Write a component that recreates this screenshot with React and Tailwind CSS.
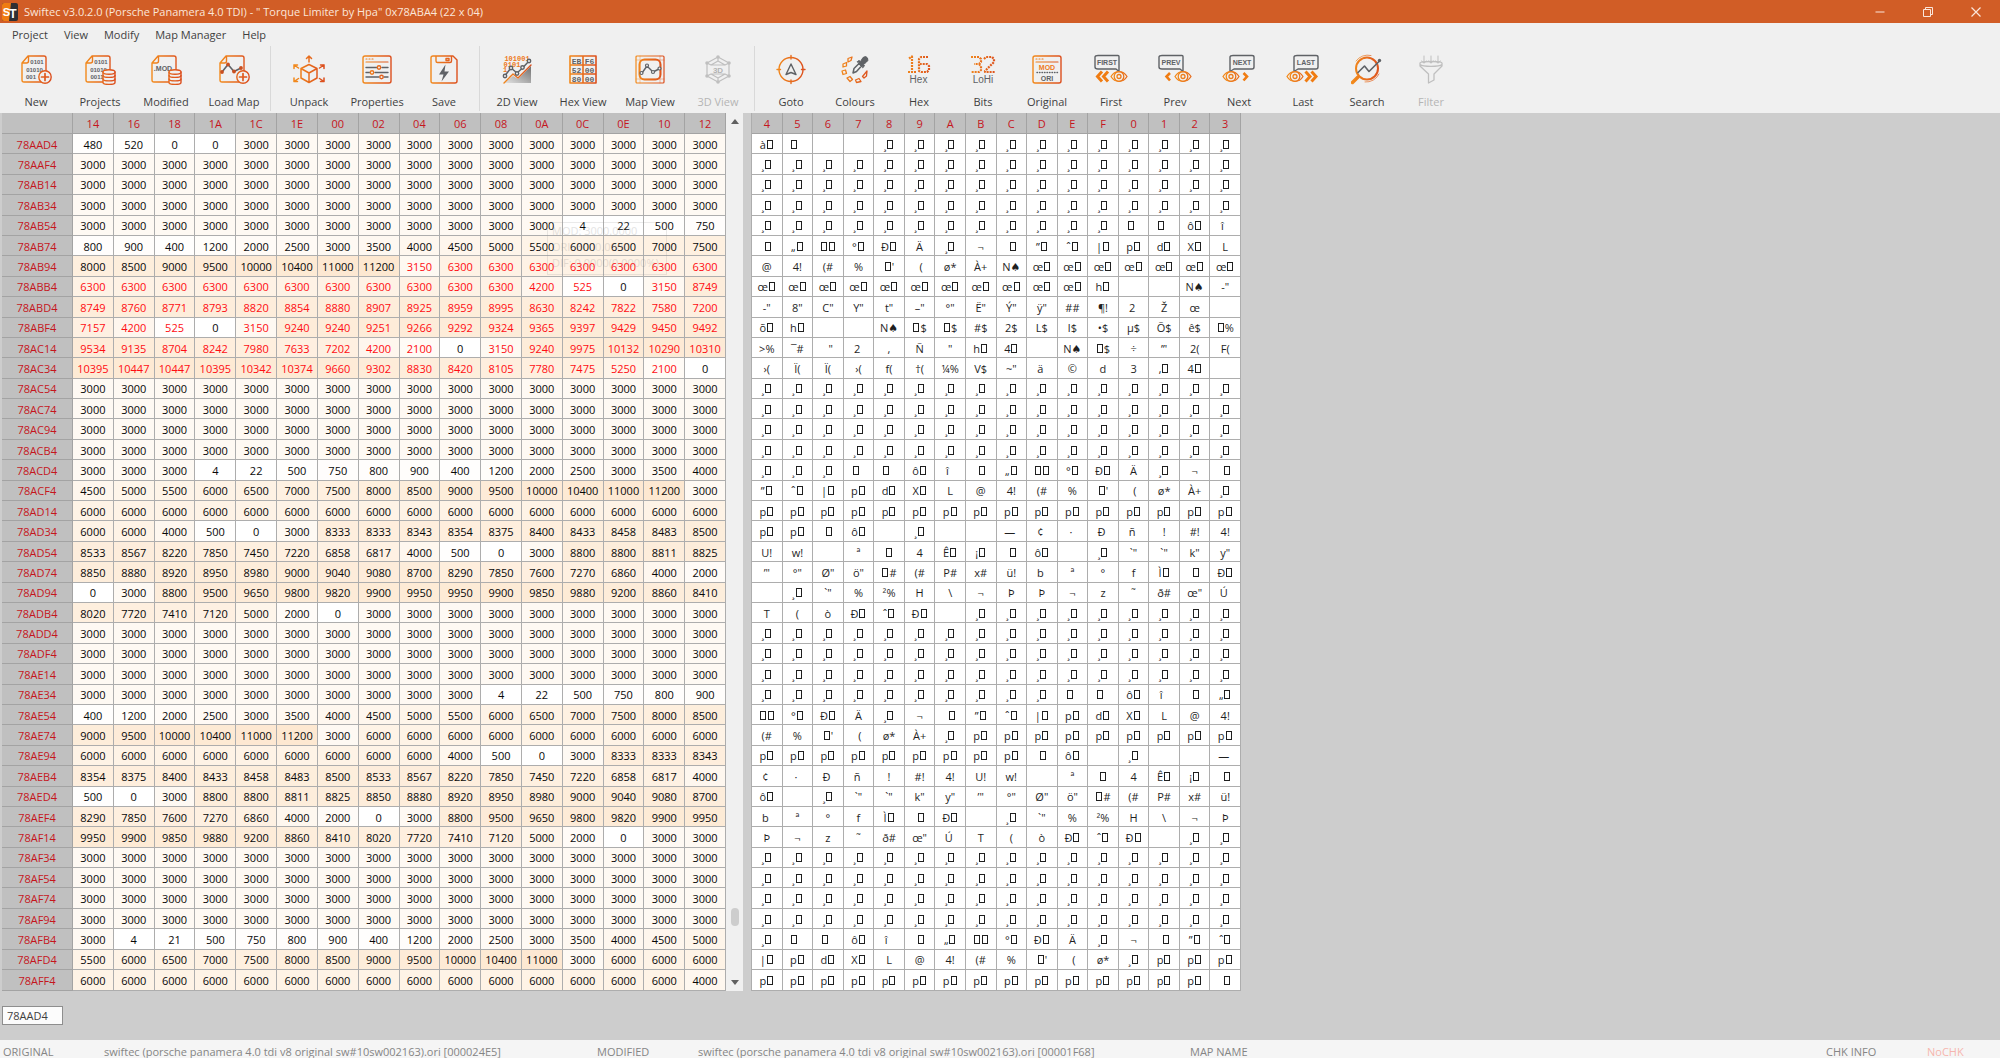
import React from "react";

const INK = "#5f6266";
const G = "url(#flame)";

const COLUMNS = "14 16 18 1A 1C 1E 00 02 04 06 08 0A 0C 0E 10 12".split(" ");
const ASCII_COLUMNS = "4 5 6 7 8 9 A B C D E F 0 1 2 3".split(" ");
const START_ADDRESS = 0x78aad4;
const ROW_BYTES = 32;
const MAX_VALUE = 11200;
const MAP_FIRST = 6 * 16 + 8;
const MAP_LAST = 11 * 16 + 15;

// One entry per row; "value*count" repeats a value.
const ROWS = [
  "480 520 0 0 3000*12",
  "3000*16",
  "3000*16",
  "3000*16",
  "3000*12 4 22 500 750",
  "800 900 400 1200 2000 2500 3000 3500 4000 4500 5000 5500 6000 6500 7000 7500",
  "8000 8500 9000 9500 10000 10400 11000 11200 3150 6300*7",
  "6300*11 4200 525 0 3150 8749",
  "8749 8760 8771 8793 8820 8854 8880 8907 8925 8959 8995 8630 8242 7822 7580 7200",
  "7157 4200 525 0 3150 9240 9240 9251 9266 9292 9324 9365 9397 9429 9450 9492",
  "9534 9135 8704 8242 7980 7633 7202 4200 2100 0 3150 9240 9975 10132 10290 10310",
  "10395 10447 10447 10395 10342 10374 9660 9302 8830 8420 8105 7780 7475 5250 2100 0",
  "3000*16",
  "3000*16",
  "3000*16",
  "3000*16",
  "3000*3 4 22 500 750 800 900 400 1200 2000 2500 3000 3500 4000",
  "4500 5000 5500 6000 6500 7000 7500 8000 8500 9000 9500 10000 10400 11000 11200 3000",
  "6000*16",
  "6000 6000 4000 500 0 3000 8333 8333 8343 8354 8375 8400 8433 8458 8483 8500",
  "8533 8567 8220 7850 7450 7220 6858 6817 4000 500 0 3000 8800 8800 8811 8825",
  "8850 8880 8920 8950 8980 9000 9040 9080 8700 8290 7850 7600 7270 6860 4000 2000",
  "0 3000 8800 9500 9650 9800 9820 9900 9950 9950 9900 9850 9880 9200 8860 8410",
  "8020 7720 7410 7120 5000 2000 0 3000*9",
  "3000*16",
  "3000*16",
  "3000*16",
  "3000*10 4 22 500 750 800 900",
  "400 1200 2000 2500 3000 3500 4000 4500 5000 5500 6000 6500 7000 7500 8000 8500",
  "9000 9500 10000 10400 11000 11200 3000 6000*9",
  "6000*9 4000 500 0 3000 8333 8333 8343",
  "8354 8375 8400 8433 8458 8483 8500 8533 8567 8220 7850 7450 7220 6858 6817 4000",
  "500 0 3000 8800 8800 8811 8825 8850 8880 8920 8950 8980 9000 9040 9080 8700",
  "8290 7850 7600 7270 6860 4000 2000 0 3000 8800 9500 9650 9800 9820 9900 9950",
  "9950 9900 9850 9880 9200 8860 8410 8020 7720 7410 7120 5000 2000 0 3000 3000",
  "3000*16",
  "3000*16",
  "3000*16",
  "3000*16",
  "3000 4 21 500 750 800 900 400 1200 2000 2500 3000 3500 4000 4500 5000",
  "5500 6000 6500 7000 7500 8000 8500 9000 9500 10000 10400 11000 3000 6000*3",
  "6000*15 4000",
].map((row) =>
  row.split(" ").flatMap((item) => {
    const [value, count = "1"] = item.split("*");
    return Array(Number(count)).fill(Number(value));
  })
);

// Windows-1252 characters for bytes 0x80 to 0x9F; 0x8D draws nothing.
const HIGH = "€▯‚ƒ„…†‡ˆ‰Š‹Œ\u200bŽ▯▯‘’“”•–—˜™š›œ▯žŸ";

function glyph(byte) {
  if (byte === 0x00 || byte === 0x02) return "\u00a0\u00a0";
  if ([0x09, 0x0a, 0x0d, 0x26].includes(byte)) return "";
  if (byte >= 0x1c && byte <= 0x1f) return "";
  if (byte === 0x0c) return "♠";
  if (byte < 0x20) return "▯";
  if (byte === 0x20) return "\u00a0";
  if (byte >= 0x80 && byte <= 0x9f) return HIGH[byte - 0x80];
  return String.fromCharCode(byte);
}

// A byte without a printable character shows as an empty box.
function Glyph({ byte }) {
  const text = glyph(byte);
  return text === "▯" ? <span className="mx-px inline-block h-[9px] w-1.5 border border-current" /> : text;
}

function heat(value) {
  const t = Math.min(value / MAX_VALUE, 1);
  const mix = (end) => Math.round(255 + (end - 255) * t);
  return `rgb(${mix(253)}, ${mix(232)}, ${mix(209)})`;
}

function Svg({ children, width = 32 }) {
  return (
    <svg width={width} height="32" viewBox={`0 0 ${width} 32`} fill="none" stroke={G} strokeWidth="1.4" strokeLinejoin="round" strokeLinecap="round" aria-hidden="true">
      {children}
    </svg>
  );
}

function T({ x, y, size = 6, fill = INK, weight = 700, children, mono }) {
  return (
    <text x={x} y={y} fontSize={size} fill={fill} stroke="none" fontWeight={weight} textAnchor="middle" fontFamily={mono ? "Liberation Mono, monospace" : "Liberation Sans, sans-serif"}>
      {children}
    </text>
  );
}

const Sheet = () => <path d="M8 2H24Q26 2 26 4V26Q26 28 24 28H4Q2 28 2 26V9ZM8.500 2V7Q8.500 9 6.500 9H2" />;
const Plus = () => (
  <g>
    <circle cx="25" cy="23" r="6.200" fill="#f0f0f0" />
    <path d="M25 19.500V26.500M21.500 23H28.500" strokeWidth="1.700" />
  </g>
);
const Database = () => (
  <g>
    <path d="M19 18V28.500C19 31 31 31 31 28.500V18" fill="#f0f0f0" />
    <ellipse cx="25" cy="18" rx="6" ry="2.200" fill="#f0f0f0" />
    <path d="M19 21.500C19 24 31 24 31 21.500M19 25C19 27.500 31 27.500 31 25" />
  </g>
);
const Binary = () => (
  <g>
    <T x="17" y="10" size="6">0101</T>
    <T x="14.500" y="17.500" size="6">01010</T>
  </g>
);
const Eye = ({ x }) => (
  <g transform={`translate(${x} 0)`} strokeWidth="1.300">
    <path d="M0 22.500C4 16 12 16 16 22.500C12 29 4 29 0 22.500Z" />
    <circle cx="8" cy="22.500" r="4.800" />
    <circle cx="8" cy="22.500" r="2" />
  </g>
);
const Bubble = ({ x, tail, label }) => (
  <g>
    <path d={tail === "right" ? "M4 1.500H24Q25 1.500 25 2.500V17.500L22 15H4Q1 15 1 13V3Q1 1.500 4 1.500Z" : "M11 1.500H30Q32 1.500 32 3V13Q32 15 30 15H12L8 17.500V3Q8 1.500 11 1.500Z"} stroke={INK} strokeWidth="1.400" />
    <T x={x} y="11" size="7">{label}</T>
  </g>
);
const WindowFrame = () => (
  <g>
    <rect x="2" y="2" width="28" height="27" rx="2" />
    <path d="M5 5H6M8 5H9M11 5H12M5 8H27" strokeWidth="1.200" />
  </g>
);

const icons = {
  new: <Svg><Sheet /><Binary /><T x="11" y="25" size="6">001</T><Plus /></Svg>,
  projects: <Svg><Sheet /><Binary /><T x="13" y="25" size="6">0011</T><Database /></Svg>,
  modified: <Svg><Sheet /><T x="13" y="16.500" size="7">.MOD</T><Database /></Svg>,
  loadMap: (
    <Svg>
      <Sheet />
      <path d="M4 18L10 10.500L16 17.500L23 14" stroke={INK} strokeWidth="1.600" />
      <g fill="#c94f20" stroke="none"><circle cx="4" cy="18" r="1.900" /><circle cx="10" cy="10.500" r="1.900" /><circle cx="16" cy="17.500" r="1.900" /><circle cx="23" cy="14" r="1.900" /></g>
      <Plus />
    </Svg>
  ),
  unpack: (
    <Svg>
      <path d="M16 10.500L24 14.500V24L16 28.500L8 24V14.500ZM8 14.500L16 19L24 14.500M16 19V28.500M16 8V2M13.500 4.500L16 2L18.500 4.500M5.500 14L1 11M1 14.500V11H4.500M26.500 14L31 11M27.500 11H31V14.500M5.500 24.500L1 27.500M1 24V27.500H4.500M26.500 24.500L31 27.500M27.500 27.500H31V24" strokeWidth="1.500" />
    </Svg>
  ),
  properties: (
    <Svg>
      <WindowFrame />
      <path d="M5 13.500H16M21 13.500H27M5 18.500H9M14 18.500H27M5 23H18M23 23H27" stroke={INK} />
      <circle cx="18" cy="13.500" r="1.700" /><circle cx="11" cy="18.500" r="1.700" /><circle cx="20.500" cy="23" r="1.700" />
    </Svg>
  ),
  save: (
    <Svg>
      <path d="M5 2H25L29 6V27Q29 29 27 29H5Q3 29 3 27V4Q3 2 5 2ZM8 2V7Q8 8.500 9.500 8.500H22Q23.500 8.500 23.500 7V2M18 4.500H21V6.500H18Z" />
      <path d="M17.500 10.500L11 20.500H15.500L13.500 27.500L21 17.500H16.500Z" fill={INK} stroke="none" />
    </Svg>
  ),
  view2d: (
    <Svg>
      <T x="16" y="7" size="7" fill="#ee7a1c" mono>101001</T>
      <T x="11" y="12.500" size="7" fill="#ee7a1c" mono>0101</T>
      <T x="4" y="18" size="7" fill="#ee7a1c" mono>1</T>
      <path d="M3 29L12 22L17 25L30 12V29Z" fill="url(#steel)" stroke="none" />
      <path d="M3 29L12 20L17 24L30 11" />
      <path d="M4 21.500L10 14L16 19L21.500 14L28 7" stroke={INK} strokeWidth="1.500" />
      <g stroke={INK} fill="#f0f0f0"><circle cx="4" cy="22" r="1.700" /><circle cx="10" cy="14" r="1.700" /><circle cx="16" cy="19.500" r="1.700" /><circle cx="21.500" cy="13.500" r="1.700" /><circle cx="28" cy="7" r="1.700" /></g>
    </Svg>
  ),
  hexView: (
    <Svg>
      <path d="M3 2H29V29H3ZM3 11H29M3 20H29M16 2V29" strokeWidth="1.600" />
      <T x="9.500" y="9.500" size="8" mono>EB</T><T x="22.500" y="9.500" size="8" mono>F6</T>
      <T x="9.500" y="18.500" size="8" mono>52</T><T x="22.500" y="18.500" size="8" mono>00</T>
      <T x="9.500" y="27.500" size="8" mono>80</T><T x="22.500" y="27.500" size="8" mono>00</T>
    </Svg>
  ),
  mapView: (
    <Svg>
      <rect x="2" y="2" width="28" height="27" rx="1" strokeWidth="1.200" />
      <path d="M2 6H30M2 25H30M6 2V29M26 2V29" strokeWidth="0.400" />
      <rect x="5.500" y="5.500" width="21" height="20" rx="5" strokeWidth="2" />
      <path d="M8 19L13 12L19 18L25 15" stroke={INK} strokeWidth="1.400" />
      <g stroke={INK} fill="#f0f0f0" strokeWidth="1.200"><circle cx="7.500" cy="19" r="1.500" /><circle cx="13" cy="11.500" r="1.500" /><circle cx="19" cy="18" r="1.500" /><circle cx="25.500" cy="14.500" r="1.500" /></g>
    </Svg>
  ),
  view3d: (
    <Svg>
      <g stroke="#bfbfbf" strokeWidth="1.200">
        <path d="M16 3L27 9V22L16 28L5 22V9ZM16 3V7M27 9L23 11M27 22L23 20M16 28V24M5 22L9 20M5 9L9 11M16 7L23 11H9ZM9 20H23L16 24Z" />
        <g fill="#bfbfbf" stroke="none"><circle cx="16" cy="3" r="1.800" /><circle cx="27" cy="9" r="1.800" /><circle cx="27" cy="22" r="1.800" /><circle cx="16" cy="28" r="1.800" /><circle cx="5" cy="22" r="1.800" /><circle cx="5" cy="9" r="1.800" /></g>
      </g>
      <T x="16" y="18.500" size="8" fill="#b4b4b4">3D</T>
    </Svg>
  ),
  goto: (
    <Svg>
      <circle cx="16" cy="15.500" r="12" />
      <path d="M16 1.500V5M16 26V29.500M2 15.500H5.500M26.500 15.500H30" />
      <path d="M16 10L21 20.500L16 18.500L11 20.500Z" stroke={INK} />
    </Svg>
  ),
  colours: (
    <Svg>
      <path d="M9 4.500L13 3L12 6.500L9 8ZM4 10L7.500 8.500V12L4 13ZM3 17L6.500 16L7.500 19.500L4 20.500ZM8 24L11 22.500L13.500 25.500L11 27.500ZM16.500 26L20 24.500L22 27.500L17.500 28.500ZM23.500 22.500L26 19.500L28 17L27.500 22L25 24Z" strokeWidth="1.300" />
      <path d="M14 19L15 14.500L20 9.500L22.500 12L17.500 17.500Z" stroke={INK} strokeWidth="1.500" />
      <path d="M18.500 7.500L20 6.500L21.500 7.500L24 3.500Q27 1.500 28.500 4Q30 6.500 27 8.500L24.500 10.500L25.500 12L24 13.500Z" fill={INK} stroke={INK} strokeWidth="1" />
    </Svg>
  ),
  hex: (
    <Svg>
      <path d="M6 4.500L9 2.500V18M5 18H13M25 3H18L16 5V17L18 18H24L26 16V12L24 10H17" strokeWidth="2.200" strokeDasharray="2 1" strokeLinecap="butt" />
      <T x="15.500" y="28.500" size="10" weight="400">Hex</T>
    </Svg>
  ),
  bits: (
    <Svg>
      <path d="M4 3H12L14 5V8L12 10H7M12 10L14 12V16L12 18H4M17 5L19 3H25L27 5V8L18 17V18H28" strokeWidth="2.200" strokeDasharray="2 1" strokeLinecap="butt" />
      <T x="16" y="28.500" size="10" weight="400">LoHi</T>
    </Svg>
  ),
  original: (
    <Svg>
      <WindowFrame />
      <T x="16" y="16" size="7" fill="#ee7a1c">MOD</T>
      <path d="M6 18.500H27" stroke={INK} strokeDasharray="0.500 2" />
      <T x="16" y="26.500" size="7">ORI</T>
    </Svg>
  ),
  first: (
    <Svg width={34}>
      <Bubble x="13" tail="right" label="FIRST" />
      <path d="M8 17.500L3.500 22.500L8 27.500M14 17.500L9.500 22.500L14 27.500" stroke="#f07c12" strokeWidth="3" strokeLinecap="butt" strokeLinejoin="miter" />
      <Eye x={17} />
    </Svg>
  ),
  prev: (
    <Svg width={34}>
      <Bubble x="13" tail="right" label="PREV" />
      <path d="M12 19L8.500 22.500L12 26.500" stroke="#f07c12" strokeWidth="2.600" strokeLinecap="butt" strokeLinejoin="miter" />
      <Eye x={17} />
    </Svg>
  ),
  next: (
    <Svg width={34}>
      <Bubble x="20" tail="left" label="NEXT" />
      <path d="M21.500 19L25 22.500L21.500 26.500" stroke="#f07c12" strokeWidth="2.600" strokeLinecap="butt" strokeLinejoin="miter" />
      <Eye x={1} />
    </Svg>
  ),
  last: (
    <Svg width={34}>
      <Bubble x="20" tail="left" label="LAST" />
      <path d="M19.500 17.500L24 22.500L19.500 27.500M25.500 17.500L30 22.500L25.500 27.500" stroke="#f07c12" strokeWidth="3" strokeLinecap="butt" strokeLinejoin="miter" />
      <Eye x={1} />
    </Svg>
  ),
  search: (
    <Svg>
      <circle cx="16" cy="14.500" r="11" strokeWidth="2" />
      <path d="M5 7A14 14 0 0 1 20 1.500M28 20A14 14 0 0 1 14 28" strokeWidth="0.700" />
      <path d="M7 23L1.500 28.500" strokeWidth="3.500" />
      <path d="M7 18.500L13.500 12L18 17.500L28 7.500" stroke={INK} strokeWidth="1.600" />
      <circle cx="28.500" cy="6.500" r="1.700" fill={INK} stroke="none" />
    </Svg>
  ),
  filter: (
    <Svg>
      <g stroke="#bfbfbf" strokeWidth="1.300">
        <path d="M5 9C5 7 27 7 27 9V12L19 20V26L13.500 29V20L5 12ZM5 10.500C8 13 24 13 27 10.500" />
        <path d="M9 2V9M6.500 7L9 9L11.500 7M16 2V9M13.500 7L16 9L18.500 7M23 2V9M20.500 7L23 9L25.500 7" strokeWidth="1" />
      </g>
    </Svg>
  ),
};

const TOOL_GROUPS = [
  [["new", "New", "w-16"], ["projects", "Projects", "w-16"], ["modified", "Modified", "w-[68px]"], ["loadMap", "Load Map", "w-[68px]"]],
  [["unpack", "Unpack", "w-[68px]"], ["properties", "Properties", "w-[68px]"], ["save", "Save", "w-[66px]"]],
  [["view2d", "2D View", "w-[66px]"], ["hexView", "Hex View", "w-[66px]"], ["mapView", "Map View", "w-[68px]"], ["view3d", "3D View", "w-[68px]", true]],
  [["goto", "Goto", "w-16"], ["colours", "Colours", "w-16"], ["hex", "Hex", "w-16"], ["bits", "Bits", "w-16"], ["original", "Original", "w-16"], ["first", "First", "w-16"], ["prev", "Prev", "w-16"], ["next", "Next", "w-16"], ["last", "Last", "w-16"], ["search", "Search", "w-16"], ["filter", "Filter", "w-16", true]],
];

function TitleBar() {
  return (
    <header className="flex h-[23px] shrink-0 items-center bg-[#d15d26] text-[11px] leading-4 text-[#fbe6da]">
      <svg className="ml-0.5 mr-1.5 shrink-0" width="16" height="18" viewBox="0 0 16 18" aria-hidden="true">
        <rect width="16" height="18" rx="2" fill="#2f2f33" />
        <path d="M2 0H9L7 18H2Q0 18 0 16V2Q0 0 2 0Z" fill="#f07c12" />
        <text x="4.500" y="13" fontSize="11" fontWeight="700" fill="#fff" textAnchor="middle" fontFamily="Liberation Sans, sans-serif">S</text>
        <text x="11" y="15" fontSize="12" fontWeight="700" fill="#fff" textAnchor="middle" fontFamily="Liberation Sans, sans-serif">T</text>
      </svg>
      <h1 className="grow whitespace-pre">Swiftec v3.0.2.0 (Porsche Panamera 4.0 TDI) - " Torque Limiter by Hpa" 0x78ABA4 (22 x 04)</h1>
      <button aria-label="Minimize" className="grid h-full w-12 place-items-center">
        <svg width="10" height="10" viewBox="0 0 10 10" stroke="currentColor"><path d="M0.500 5H9.500" /></svg>
      </button>
      <button aria-label="Restore" className="grid h-full w-12 place-items-center">
        <svg width="10" height="10" viewBox="0 0 10 10" fill="none" stroke="currentColor"><path d="M2.500 2.500V0.500H9.500V7.500H7.500M0.500 2.500H7.500V9.500H0.500Z" /></svg>
      </button>
      <button aria-label="Close" className="grid h-full w-12 place-items-center">
        <svg width="10" height="10" viewBox="0 0 10 10" stroke="currentColor" strokeWidth="1.200"><path d="M0.500 0.500L9.500 9.500M9.500 0.500L0.500 9.500" /></svg>
      </button>
    </header>
  );
}

function Toolbar() {
  return (
    <div className="flex h-[67px] shrink-0 pl-1" role="toolbar" aria-label="Main">
      {TOOL_GROUPS.map((group, i) => (
        <div key={i} className={i < 3 ? "mb-0.5 mr-1 flex border-r border-[#d9d9d9] pr-0.5" : "flex"}>
          {group.map(([icon, label, width, disabled]) => (
            <button key={icon} disabled={disabled} className={`${width} flex flex-col items-center pt-2 text-[11px] leading-4 ${disabled ? "text-[#b5b5b5]" : "text-[#3f3f3f]"}`}>
              {icons[icon]}
              <span className="mt-2 whitespace-nowrap">{label}</span>
            </button>
          ))}
        </div>
      ))}
    </div>
  );
}

const HEAD = "h-[21px] border-b border-r border-[#a3a3a3] bg-[#c0c0c0] p-0 pt-0.5 font-normal text-[#c5161d]";
const CELL = "border-b border-r border-[#adadad] p-0 pt-0.5 text-center";

function HexTable() {
  return (
    <table className="h-full w-full table-fixed border-separate border-spacing-0 text-[11px] leading-4">
      <colgroup>
        <col className="w-[71px]" />
        {COLUMNS.map((c) => <col key={c} />)}
      </colgroup>
      <thead>
        <tr>
          <th className={HEAD} aria-label="Address" />
          {COLUMNS.map((c) => <th key={c} scope="col" className={HEAD}>{c}</th>)}
        </tr>
      </thead>
      <tbody>
        {ROWS.map((row, r) => (
          <tr key={r}>
            <th scope="row" className="border-b border-r border-[#a3a3a3] bg-[#c0c0c0] p-0 pt-0.5 font-normal text-[#c5161d]">
              {(START_ADDRESS + r * ROW_BYTES).toString(16).toUpperCase()}
            </th>
            {row.map((value, c) => {
              const index = r * 16 + c;
              const modified = index >= MAP_FIRST && index <= MAP_LAST && value > 0;
              return (
                <td key={c} className={`${CELL} ${modified ? "text-[#ff0d12]" : "text-[#080808]"}`} style={{ backgroundColor: heat(value) }}>
                  {value}
                </td>
              );
            })}
          </tr>
        ))}
      </tbody>
    </table>
  );
}

function AsciiTable() {
  return (
    <table className="h-full w-full table-fixed border-separate border-spacing-0 border-l border-[#adadad] text-[11px] leading-4">
      <thead>
        <tr>{ASCII_COLUMNS.map((c) => <th key={c} scope="col" className={HEAD}>{c}</th>)}</tr>
      </thead>
      <tbody>
        {ROWS.map((row, r) => (
          <tr key={r}>
            {row.map((value, c) => (
              <td key={c} className={`${CELL} whitespace-nowrap bg-white text-[#1f1f1f]`}>
                <Glyph byte={value & 255} />
                <Glyph byte={value >> 8} />
              </td>
            ))}
          </tr>
        ))}
      </tbody>
    </table>
  );
}

function ScrollBar() {
  return (
    <div className="flex w-[17px] shrink-0 flex-col items-center bg-[#f0f0f0] py-1.5">
      <svg width="8" height="5" viewBox="0 0 8 5" fill="#606060" aria-hidden="true"><path d="M0 5L4 0L8 5Z" /></svg>
      <div className="grow-[784]" />
      <div className="h-[18px] w-2 rounded-full bg-[#cdcdcd]" />
      <div className="grow-[54]" />
      <svg width="8" height="5" viewBox="0 0 8 5" fill="#606060" aria-hidden="true"><path d="M0 0L4 5L8 0Z" /></svg>
    </div>
  );
}

export default function App() {
  return (
    <div className="flex h-screen flex-col overflow-hidden bg-[#f0f0f0] font-['Open_Sans','Noto_Sans','DejaVu_Sans',sans-serif]">
      <svg width="0" height="0" className="absolute" aria-hidden="true">
        <defs>
          <linearGradient id="flame" gradientUnits="userSpaceOnUse" x1="2" y1="0" x2="30" y2="0">
            <stop offset="0" stopColor="#f28a1c" />
            <stop offset="1" stopColor="#dc4f1e" />
          </linearGradient>
          <linearGradient id="steel" x1="0" y1="1" x2="1" y2="0">
            <stop offset="0" stopColor="#e4e4e4" />
            <stop offset="1" stopColor="#707070" />
          </linearGradient>
        </defs>
      </svg>
      <TitleBar />
      <nav className="flex h-[23px] shrink-0 items-center gap-4 pl-3 text-[11px] leading-4 text-[#3f3f3f]">
        {["Project", "View", "Modify", "Map Manager", "Help"].map((m) => <button key={m}>{m}</button>)}
      </nav>
      <Toolbar />
      <main className="flex min-h-0 grow flex-col bg-[#cdcdcd]">
        <div className="flex min-h-0 grow pl-0.5">
          <div className="relative min-w-0 grow-[724] basis-0">
            <HexTable />
            <div className="pointer-events-none absolute left-[545px] top-[109px] h-[53px] w-[120px] whitespace-nowrap border border-[#999] pl-1 text-[11px] leading-4 text-[#777] opacity-20">
              <p>MOD: 3000.0000</p>
              <p>ORI: 3000.0000</p>
              <p>DIF: 0.0000(0.0000%)</p>
            </div>
          </div>
          <ScrollBar />
          <div className="w-2 shrink-0" />
          <div className="min-w-0 grow-[490] basis-0"><AsciiTable /></div>
          <div className="min-w-0 grow-[759] basis-0" />
        </div>
        <div className="h-[49px] shrink-0 pl-0.5 pt-[15px]">
          <input aria-label="Address" defaultValue="78AAD4" className="block h-[19px] w-[61px] border border-[#8e8e8e] bg-[#fcfcfc] px-1 text-[11px] leading-4 text-[#3f3f3f]" />
        </div>
      </main>
      <footer className="grid h-[18px] shrink-0 grid-cols-[101fr_493fr_101fr_492fr_636fr_101fr_73fr] whitespace-nowrap bg-[#f5f5f5] pl-[3px] pt-1 text-[11px] leading-4 text-[#858585]">
        <span>ORIGINAL</span>
        <span>swiftec (porsche panamera 4.0 tdi v8 original sw#10sw002163).ori [000024E5]</span>
        <span>MODIFIED</span>
        <span>swiftec (porsche panamera 4.0 tdi v8 original sw#10sw002163).ori [00001F68]</span>
        <span>MAP NAME</span>
        <span>CHK INFO</span>
        <span className="text-[#f6b5ae]">NoCHK</span>
      </footer>
    </div>
  );
}
